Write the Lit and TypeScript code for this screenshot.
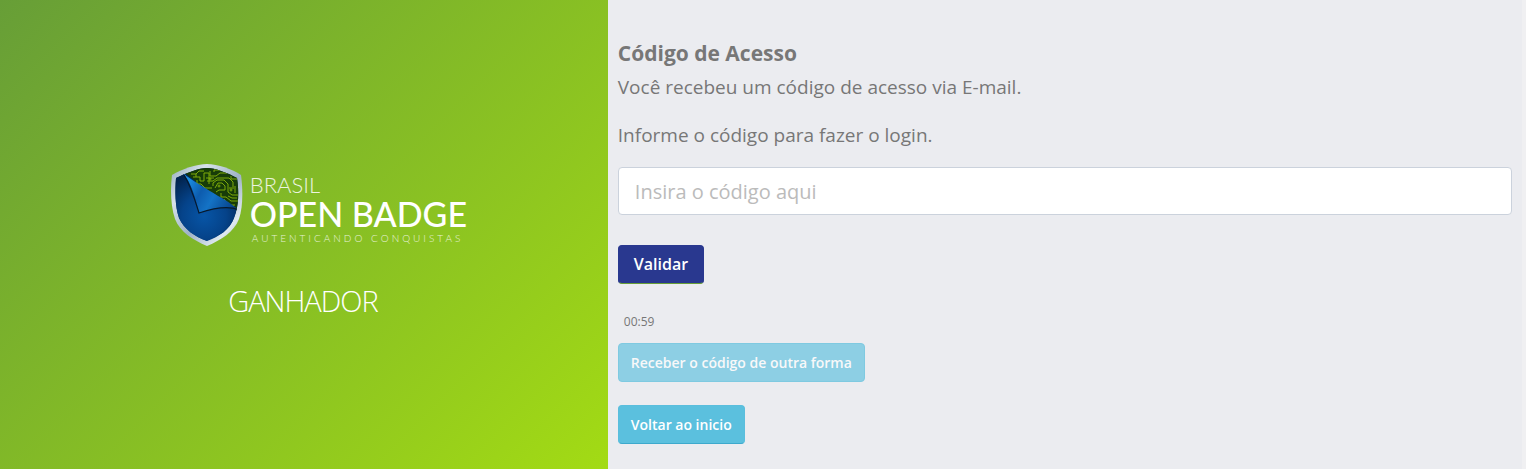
import { LitElement, html, css } from "lit";
import { customElement, state } from "lit/decorators.js";

@customElement("badge-logo")
class BadgeLogo extends LitElement {
  static styles = css`
    :host { display: block; }
    .logo { display: flex; gap: 7px; color: #fff; font-family: Lato, "Open Sans", sans-serif; }
    .shield { display: block; width: 72px; height: 82px; flex: none; }
    .words { display: flex; flex-direction: column; padding-top: 7px; white-space: nowrap; }
    .country { font-size: 22px; line-height: 28px; font-weight: 300; opacity: .85; }
    .name { font-size: 34px; line-height: 30px; font-weight: 500; }
    .tagline { font-size: 10px; line-height: 18px; font-weight: 300; letter-spacing: 3px; padding-left: 2px; opacity: .8; }
  `;
  render() {
    return html`
      <div class="logo">
        <svg class="shield" viewBox="0 0 72 82" aria-hidden="true">
          <defs>
            <linearGradient id="rim" x1="0" y1="0" x2="1" y2="1">
              <stop offset="0" stop-color="#93a8bb" /><stop offset=".25" stop-color="#d6e2ea" />
              <stop offset=".55" stop-color="#9fb2c6" /><stop offset=".8" stop-color="#dfe9f0" />
              <stop offset="1" stop-color="#8ea4ba" />
            </linearGradient>
            <radialGradient id="body" gradientUnits="userSpaceOnUse" cx="33" cy="52" r="44">
              <stop offset="0" stop-color="#0755a6" /><stop offset=".5" stop-color="#05438a" />
              <stop offset="1" stop-color="#02244f" />
            </radialGradient>
            <linearGradient id="fold" gradientUnits="userSpaceOnUse" x1="16" y1="20" x2="62" y2="46">
              <stop offset="0" stop-color="#1a8ce0" /><stop offset=".3" stop-color="#0d5cae" />
              <stop offset=".55" stop-color="#1473c6" /><stop offset="1" stop-color="#063f86" />
            </linearGradient>
            <clipPath id="inside"><path d="M36 4C28 4 15 9 5 14C4 27 4 42 8 54C13 65 24 73 36 77C48 73 59 65 63 54C68 42 68 27 66 14C57 9 44 4 36 4Z" /></clipPath>
          </defs>
          <path d="M36 0C25 0 11 5 1 11C-1 26 0 43 4 55C9 68 22 76 36 82C50 76 63 68 68 55C72 43 72 26 70 11C61 5 47 0 36 0Z" fill="url(#rim)" />
          <g clip-path="url(#inside)">
            <rect width="72" height="82" fill="url(#body)" />
            <path d="M14 9L36 2L70 12V48L66 50Z" fill="#173c08" />
            <g fill="none" stroke="#7eaa09" stroke-width="1">
              <path d="M20 10H25L28 7H33M22 13H29V17H33V9H38V20M26 16V20H30L34 24H41M39 7V12H45L49 9H56M43 8V6H51M35 14H43M36 17H42L46 14H58L62 18V25M42 22V19L46 16H53L57 20V28L61 31H67M44 24L47 19H51L54 22V26H48L45 28M50 29V33H55L60 37H67M57 32L61 34H66M53 35L58 41H64M58 24H61M60 12V15H66M62 41V46M64 22V29M25 10V13" />
              <circle cx="48" cy="22" r="1" /><circle cx="39" cy="15" r="1" /><circle cx="60" cy="26" r="1" />
            </g>
            <path d="M13 9C20 18 34 25 47 32C56 37 63 41 66 48L69 61L29 80L0 50V9Z" fill="url(#body)" />
            <path d="M12 9C21 17 35 24 47 32C56 37 62 41 68 46C57 41 43 44 28 49C25 34 20 19 12 9Z" fill="url(#fold)" />
            <path d="M13 11C20 22 24 36 28 49C43 44 57 41 68 46" fill="none" stroke="#07192d" stroke-width="1.2" />
          </g>
        </svg>
        <div class="words">
          <span class="country">BRASIL</span>
          <span class="name">OPEN BADGE</span>
          <span class="tagline">AUTENTICANDO CONQUISTAS</span>
        </div>
      </div>`;
  }
}

@customElement("app-root")
class AppRoot extends LitElement {
  static styles = css`
    :host { display: block; min-height: 100vh; background: #f0f0f2; font-family: "Open Sans", sans-serif; color: #777; }
    * { box-sizing: border-box; }
    .page { display: grid; grid-template-columns: 2fr 3fr; min-height: 100vh; margin-right: 4px; background: #ebecf0; }
    .brand { display: flex; flex-direction: column; align-items: center; justify-content: center; gap: 35px; padding: 15px 2px 0 0; margin-right: 1px; background: linear-gradient(135deg, #679e37, #a3db14); }
    .logo-box { padding-left: 32px; }
    .role { margin: 0; color: #fff; font-size: 29px; line-height: 38px; font-weight: 300; letter-spacing: -1px; }
    .access { display: flex; flex-direction: column; align-items: flex-start; padding: 39px 10px 24px 9px; min-width: 0; }
    .title { margin: 0; font-size: 21px; line-height: 28px; font-weight: 700; }
    .text { font-size: 19px; line-height: 24px; margin: 0 0 24px; }
    .title + .text { margin-top: 8px; }
    .label { display: block; font-size: 19px; line-height: 24px; margin-bottom: 20px; }
    .code { width: 100%; height: 48px; padding: 0 16px; border: 1px solid #cbd2dc; border-radius: 4px; background: #fff; color: #555; font: 20px "Open Sans", sans-serif; }
    .code::placeholder { color: #bbb; opacity: 1; }
    .btn { height: 39px; padding: 0 12px 1px; border: 1px solid #5abedd; border-bottom-color: #3da9cc; border-radius: 4px; background: #5bc0de; color: #fff; font: 600 14px "Open Sans", sans-serif; }
    .btn.primary { margin-top: 30px; padding: 0 15px 1px; font-size: 16px; background: #29388f; border-color: #29388f; border-bottom-color: #679e37; }
    .btn:disabled { opacity: .65; border-color: #46b8da; }
    .timer { margin: 29px 0 12px 6px; font-size: 12px; line-height: 18px; }
    .back { margin-top: 23px; }
  `;
  @state() code = "";
  render() {
    return html`
      <main class="page">
        <section class="brand">
          <badge-logo class="logo-box"></badge-logo>
          <h1 class="role">GANHADOR</h1>
        </section>
        <section class="access">
          <h2 class="title">Código de Acesso</h2>
          <p class="text">Você recebeu um código de acesso via E-mail.</p>
          <label class="label" for="code">Informe o código para fazer o login.</label>
          <input class="code" id="code" type="text" placeholder="Insira o código aqui" .value=${this.code}
            @input=${(e: Event) => (this.code = (e.target as HTMLInputElement).value)} />
          <button class="btn primary" type="button">Validar</button>
          <span class="timer">00:59</span>
          <button class="btn" type="button" disabled>Receber o código de outra forma</button>
          <button class="btn back" type="button">Voltar ao inicio</button>
        </section>
      </main>`;
  }
}
